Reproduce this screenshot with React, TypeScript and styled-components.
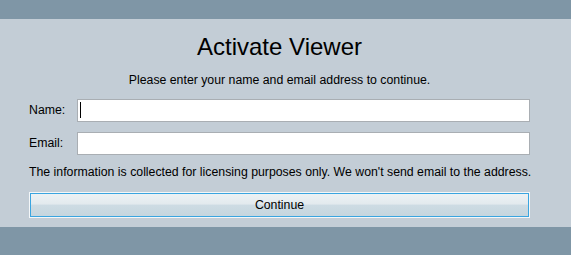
import styled, { createGlobalStyle } from 'styled-components';

const GlobalStyle = createGlobalStyle`
  html, body {
    margin: 0;
    padding: 0;
    height: 100%;
    background: #7f96a6;
  }
  body {
    font-family: 'Liberation Sans', Arial, sans-serif;
  }
`;

const App = () => {
  return (
    <Page>
      <GlobalStyle />
      <Band />
      <Panel>
        <Form>
          <Title>Activate Viewer</Title>
          <Intro>Please enter your name and email address to continue.</Intro>
          <Fields>
            <FieldRow>
              <Label htmlFor="name">Name:</Label>
              <InputWrap>
                <TextInput id="name" type="text" />
                <Caret />
              </InputWrap>
            </FieldRow>
            <FieldRow>
              <Label htmlFor="email">Email:</Label>
              <InputWrap>
                <TextInput id="email" type="text" />
              </InputWrap>
            </FieldRow>
          </Fields>
          <Note>The information is collected for licensing purposes only. We won't send email to the address.</Note>
          <ContinueButton type="button">Continue</ContinueButton>
        </Form>
      </Panel>
    </Page>
  );
};

export default App;

const Page = styled.div`
  display: flex;
  flex-direction: column;
  width: 571px;
  height: 255px;
  background: #7f96a6;
`;

const Band = styled.div`
  height: 19px;
  flex: none;
`;

const Panel = styled.div`
  background: #c3cdd6;
  padding: 14px 0 9px 29px;
`;

const Form = styled.div`
  width: 501px;
  display: flex;
  flex-direction: column;
  color: #000;
  font-size: 12.3px;
`;

const Title = styled.h1`
  margin: 0;
  font-size: 24px;
  font-weight: 400;
  text-align: center;
  line-height: 28px;
`;

const Intro = styled.p`
  margin: 12px 0 0;
  text-align: center;
  line-height: 15px;
`;

const Fields = styled.div`
  display: flex;
  flex-direction: column;
  gap: 10px;
  margin-top: 11px;
`;

const FieldRow = styled.div`
  display: flex;
  align-items: center;
`;

const Label = styled.label`
  width: 48px;
  flex: none;
  line-height: 15px;
`;

const InputWrap = styled.div`
  position: relative;
  display: flex;
`;

const TextInput = styled.input`
  box-sizing: border-box;
  width: 453px;
  height: 23px;
  margin: 0;
  padding: 0 2px;
  border: 1px solid #a9aeb3;
  background: #fff;
  font-family: inherit;
  font-size: 13px;
  outline: none;
`;

const Caret = styled.span`
  position: absolute;
  left: 3px;
  top: 3px;
  width: 1px;
  height: 16px;
  background: #000;
`;

const Note = styled.p`
  margin: 10px 0 0;
  line-height: 15px;
  white-space: nowrap;
`;

const ContinueButton = styled.button`
  box-sizing: border-box;
  margin-top: 12px;
  width: 501px;
  height: 26px;
  padding: 0;
  border: 1px solid #f4f7f9;
  box-shadow: inset 0 0 0 1px #3aa5e0;
  border-radius: 0;
  background: linear-gradient(#edf2f5 0%, #e3eaee 45%, #cddbe3 52%, #c5d5de 100%);
  font-family: inherit;
  font-size: 12.3px;
  color: #000;
  cursor: pointer;
`;
